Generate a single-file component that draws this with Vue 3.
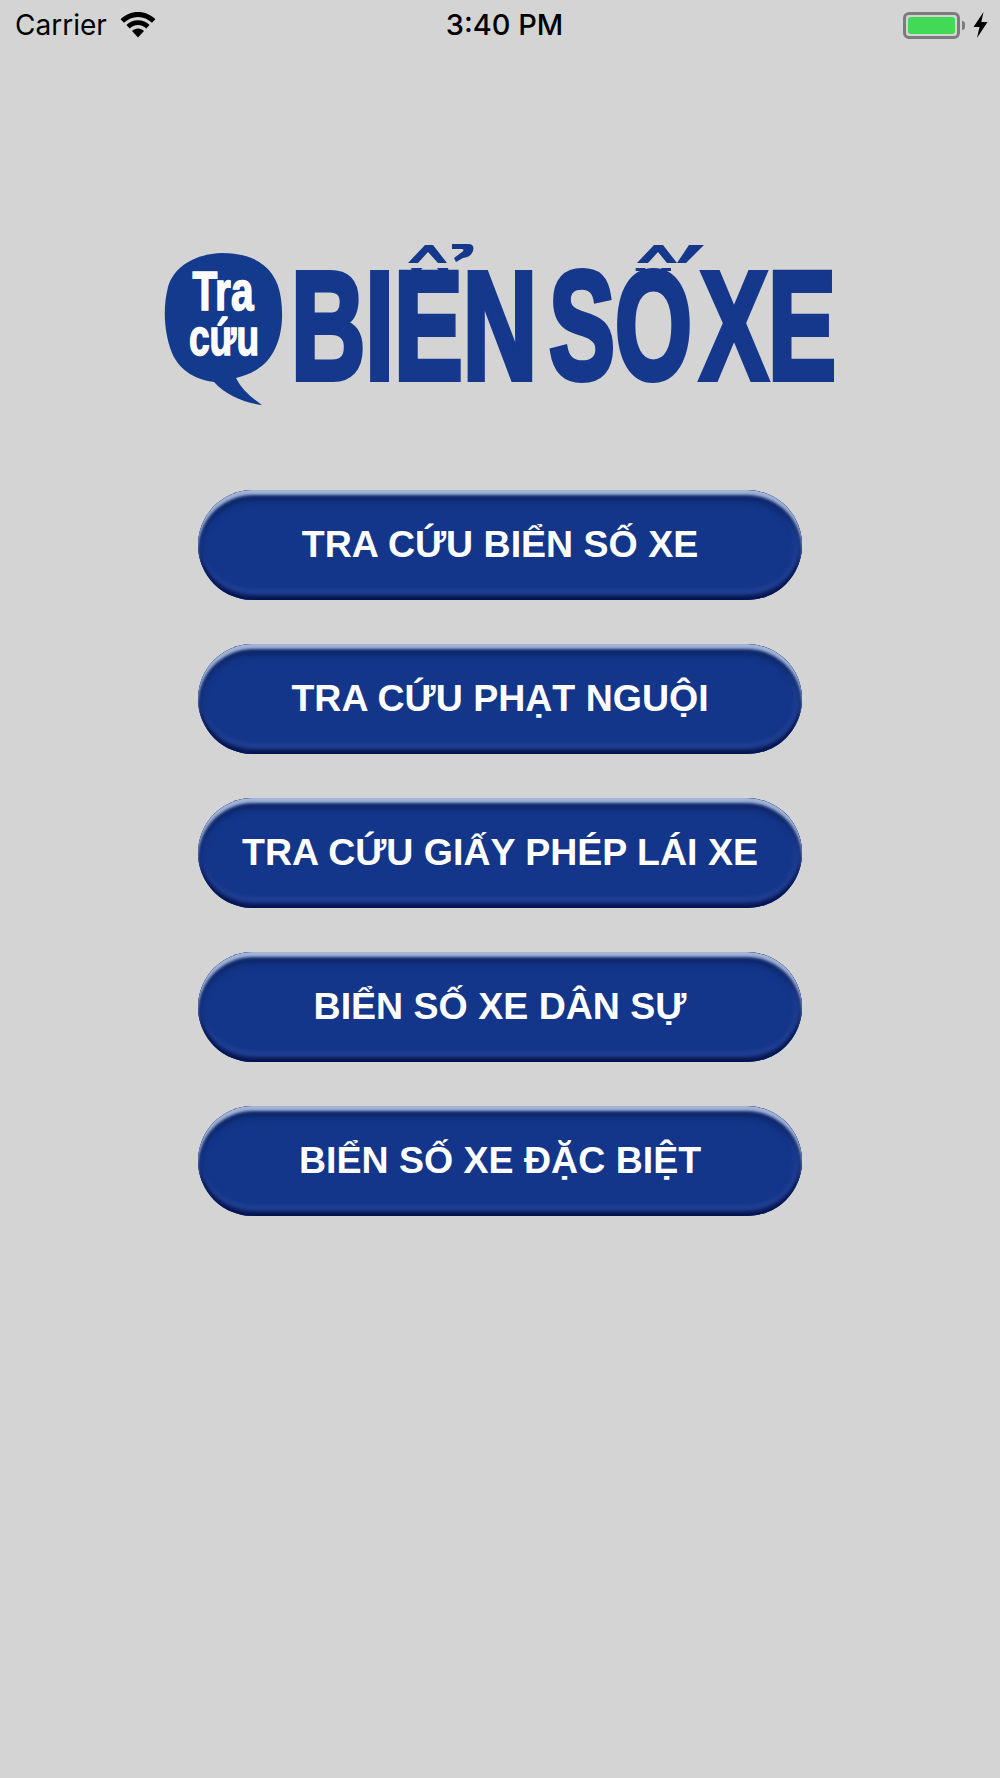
<script setup>
const buttons = [
  'TRA CỨU BIỂN SỐ XE',
  'TRA CỨU PHẠT NGUỘI',
  'TRA CỨU GIẤY PHÉP LÁI XE',
  'BIỂN SỐ XE DÂN SỰ',
  'BIỂN SỐ XE ĐẶC BIỆT'
]
</script>

<template>
  <div class="page">
    <header class="status">
      <div class="status-left">
        <span class="carrier">Carrier</span>
        <svg class="wifi" width="36" height="26" viewBox="0 0 36 26">
          <path d="M18 0C11.200 0 5.200 2.700 .6 7.200L4 10.700C7.700 7.100 12.600 4.900 18 4.900s10.300 2.200 14 5.800l3.400-3.500C30.800 2.700 24.800 0 18 0z" fill="#000"/>
          <path d="M18 8.200c-4.500 0-8.600 1.800-11.600 4.700l3.400 3.500C11.900 14.300 14.800 13 18 13s6.100 1.300 8.200 3.400l3.400-3.500C26.600 10 22.500 8.200 18 8.200z" fill="#000"/>
          <path d="M18 16.500c-2.300 0-4.400 .9-6 2.400L18 25.500l6-6.600C22.400 17.400 20.300 16.500 18 16.500z" fill="#000"/>
        </svg>
      </div>
      <span class="time">3:40 PM</span>
      <div class="status-right">
        <div class="battery"><div class="charge"></div></div>
        <div class="nub"></div>
        <svg class="bolt" width="15" height="26" viewBox="0 0 15 26">
          <path d="M10.500 0L0.500 15H6.500L4 26L14.500 10H8.300z" fill="#000"/>
        </svg>
      </div>
    </header>

    <div class="logo-wrap">
      <svg class="logo" width="680" height="170" viewBox="0 0 680 170">
        <defs>
          <clipPath id="capsOnly"><rect x="0" y="25" width="680" height="145"/></clipPath>
        </defs>
        <path class="bubble" d="M62 10C92 10 117 22 121 56C125 85 118 112 99 125C92 130 84 133 76 135C82 147 92 155 102 162C84 160 66 152 54 139C38 137 20 129 12 110C5 92 2 68 8 44C14 24 34 11 62 10z"/>
        <text class="bubble-text tra" x="63" y="67" text-anchor="middle" textLength="61" lengthAdjust="spacingAndGlyphs">Tra</text>
        <text class="bubble-text" x="64" y="112" text-anchor="middle" textLength="70" lengthAdjust="spacingAndGlyphs">cứu</text>

        <g clip-path="url(#capsOnly)">
          <text class="brand" x="131" y="136" textLength="246" lengthAdjust="spacingAndGlyphs">BIỂN</text>
          <text class="brand" x="389" y="136" textLength="143" lengthAdjust="spacingAndGlyphs">SỐ</text>
          <text class="brand" x="540" y="136" textLength="136" lengthAdjust="spacingAndGlyphs">XE</text>
        </g>
        <g class="marks">
          <path d="M248 20L265 2H273L287 20H278L268 9L258 20z"/>
          <path d="M292 1H308Q315 1 313 8Q311 14 303 15L296 19L294 15L302 9Q305 7 302 6H292z"/>
          <path d="M477 20L494 2H503L517 20H507L498 9L488 20z"/>
          <path d="M544 2H529L517 20H526z"/>
        </g>
      </svg>
    </div>

    <nav class="menu">
      <button v-for="label in buttons" :key="label" class="pill" type="button">{{ label }}</button>
    </nav>
  </div>
</template>

<style>
html, body { margin: 0; background: #d4d4d4; }
</style>

<style scoped>
.page {
  width: 1000px;
  height: 1778px;
  background: #d4d4d4;
  display: flex;
  flex-direction: column;
  overflow: hidden;
}
.status {
  height: 50px;
  flex: none;
  display: flex;
  align-items: center;
  font-family: Inter, "Liberation Sans", sans-serif;
  color: #000;
}
.status-left {
  display: flex;
  align-items: center;
  gap: 13px;
  padding-left: 15px;
  flex: 1;
}
.carrier { font-size: 28px; line-height: 50px; }
.time { font-size: 29px; font-weight: 500; line-height: 50px; padding-left: 6px; }
.status-right {
  flex: 1;
  display: flex;
  align-items: center;
  justify-content: flex-end;
  padding-right: 12px;
}
.battery {
  border: 3px solid #7c7c7c;
  border-radius: 6px;
  padding: 2px;
  display: flex;
  width: 47px;
  height: 17px;
}
.charge { flex: 1; background: #42d955; border-radius: 3px; }
.nub {
  width: 3px;
  height: 9px;
  background: #7c7c7c;
  border-radius: 0 3px 3px 0;
  margin-left: 2px;
}
.bolt { margin-left: 8px; }
.logo-wrap {
  margin-top: 193px;
  display: flex;
  justify-content: center;
}
.logo { display: block; }
.bubble { fill: #143a8e; }
.bubble-text {
  font-family: "Liberation Sans", sans-serif;
  font-weight: 700;
  font-size: 52px;
  fill: #fff;
  stroke: #fff;
  stroke-width: 1.5px;
}
.tra { font-size: 56px; }
.brand {
  font-family: "Liberation Sans", sans-serif;
  font-weight: 700;
  font-size: 154px;
  fill: #15378c;
  stroke: #15378c;
  stroke-width: 6px;
  stroke-linejoin: miter;
}
.marks path { fill: #15378c; }
.menu {
  margin-top: 77px;
  display: flex;
  flex-direction: column;
  align-items: center;
  gap: 44px;
}
.pill {
  width: 604px;
  height: 110px;
  border: 0;
  padding: 0 0 2px;
  border-radius: 55px;
  background: #14368a;
  color: #fff;
  font-family: "Liberation Sans", sans-serif;
  font-weight: 700;
  font-size: 37.5px;
  box-shadow:
    inset 0 5px 3px #a2b4d8,
    inset 0 11px 6px #0c2566,
    inset 0 -5px 4px #04144e,
    inset 0 -10px 4px #25459a,
    inset -6px 0 6px #25459a;
}
</style>
